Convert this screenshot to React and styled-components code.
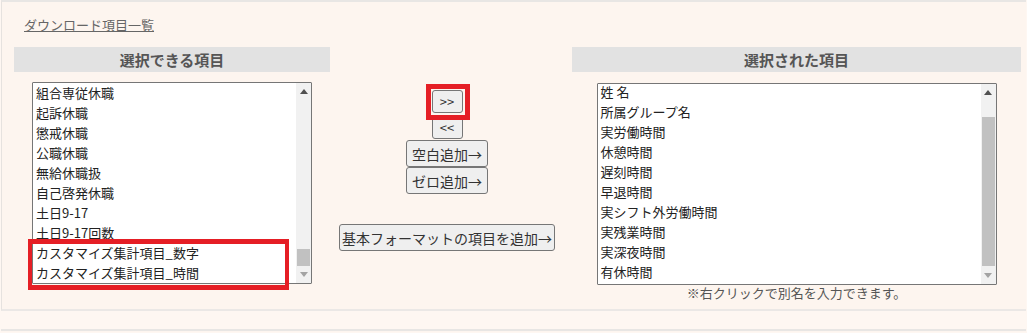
import React from "react";
import styled, { createGlobalStyle } from "styled-components";

const leftItems = [
  "組合専従休職",
  "起訴休職",
  "懲戒休職",
  "公職休職",
  "無給休職扱",
  "自己啓発休職",
  "土日9-17",
  "土日9-17回数",
  "カスタマイズ集計項目_数字",
  "カスタマイズ集計項目_時間",
];

const rightItems = [
  "姓 名",
  "所属グループ名",
  "実労働時間",
  "休憩時間",
  "遅刻時間",
  "早退時間",
  "実シフト外労働時間",
  "実残業時間",
  "実深夜時間",
  "有休時間",
];

export default function App() {
  return (
    <>
      <GlobalStyle />
      <Panel>
        <DownloadLink href="#">ダウンロード項目一覧</DownloadLink>
        <Columns>
          <Column>
            <ColumnHeader>選択できる項目</ColumnHeader>
            <ListWrap $width={280} $top={10}>
              <ListBox>
                <Items>
                  {leftItems.map((item, index) => (
                    <Item key={index}>{item}</Item>
                  ))}
                </Items>
                <ScrollBar thumbTop={149} thumbHeight={17} />
              </ListBox>
              <Highlight />
            </ListWrap>
          </Column>

          <ButtonColumn>
            <Marker>
              <ActionButton $w={31} $h={23}>
                &gt;&gt;
              </ActionButton>
            </Marker>
            <ActionButton $w={31} $h={23} $mt={3}>
              &lt;&lt;
            </ActionButton>
            <ActionButton $w={82} $h={27} $mt={1}>
              空白追加→
            </ActionButton>
            <ActionButton $w={82} $h={27}>
              ゼロ追加→
            </ActionButton>
            <ActionButton $w={216} $h={27} $mt={30}>
              基本フォーマットの項目を追加→
            </ActionButton>
          </ButtonColumn>

          <Column>
            <ColumnHeader>選択された項目</ColumnHeader>
            <ListWrap $width={400} $top={11}>
              <ListBox>
                <Items $offset={-2}>
                  {rightItems.map((item, index) => (
                    <Item key={index}>{item}</Item>
                  ))}
                </Items>
                <ScrollBar thumbTop={16} thumbHeight={149} />
              </ListBox>
            </ListWrap>
            <Note>※右クリックで別名を入力できます。</Note>
          </Column>
        </Columns>
      </Panel>
      <NextPanel />
    </>
  );
}

function ScrollBar({ thumbTop, thumbHeight }) {
  return (
    <Scroll>
      <ArrowBtn>
        <svg width="8" height="5" viewBox="0 0 8 5">
          <path d="M0 5 L4 0 L8 5 Z" fill="#505050" />
        </svg>
      </ArrowBtn>
      <Track>
        <Thumb style={{ marginTop: thumbTop, height: thumbHeight }} />
      </Track>
      <ArrowBtn>
        <svg width="8" height="5" viewBox="0 0 8 5">
          <path d="M0 0 L8 0 L4 5 Z" fill="#a3a3a3" />
        </svg>
      </ArrowBtn>
    </Scroll>
  );
}

const GlobalStyle = createGlobalStyle`
  html, body {
    margin: 0;
    overflow: hidden;
  }
  body {
    background: #fef7f2;
    font-family: "Noto Sans CJK JP", "Noto Sans", sans-serif;
    color: #222;
  }
`;

const Panel = styled.section`
  width: 1025px;
  margin-left: 1px;
  box-sizing: border-box;
  background: #fdf5ef;
  border-top: 2px solid #e8e6e4;
  border-left: 1px solid #e6e2df;
  border-bottom: 2px solid #ebe8e6;
  padding: 14px 5px 9px 12px;
`;

const NextPanel = styled.div`
  width: 1025px;
  margin: 18px 0 0 1px;
  height: 1px;
  background: #fdf5ef;
  border-top: 2px solid #e8e6e4;
`;

const DownloadLink = styled.a`
  display: block;
  margin-left: 10px;
  height: 18px;
  line-height: 18px;
  font-size: 13px;
  color: #666;
  text-decoration: underline;
  width: max-content;
`;

const Columns = styled.div`
  display: grid;
  grid-template-columns: 316px 242px 449px;
  margin-top: 13px;
`;

const Column = styled.div`
  display: flex;
  flex-direction: column;
  align-items: center;
`;

const ColumnHeader = styled.div`
  align-self: stretch;
  height: 25px;
  line-height: 25px;
  background: #e2e2e2;
  color: #555;
  font-size: 15px;
  font-weight: bold;
  text-align: center;
`;

const ListWrap = styled.div`
  position: relative;
  width: ${(p) => p.$width}px;
  margin-top: ${(p) => p.$top}px;
`;

const ListBox = styled.div`
  display: flex;
  height: 202px;
  box-sizing: border-box;
  border: 1px solid #767676;
  border-radius: 1px;
  background: #fff;
  overflow: hidden;
`;

const Items = styled.div`
  flex: 1;
  min-width: 0;
  margin-top: ${(p) => p.$offset || 0}px;
`;

const Item = styled.div`
  height: 20px;
  line-height: 20px;
  padding: 0 3px;
  font-size: 13px;
  color: #222;
  white-space: nowrap;
`;

const Scroll = styled.div`
  width: 15px;
  display: flex;
  flex-direction: column;
  background: #f1f1f1;
`;

const ArrowBtn = styled.div`
  height: 17px;
  display: flex;
  align-items: center;
  justify-content: center;
`;

const Track = styled.div`
  flex: 1;
  display: flex;
  flex-direction: column;
`;

const Thumb = styled.div`
  margin-left: 1px;
  margin-right: 1px;
  background: #c1c1c1;
`;

const Highlight = styled.div`
  position: absolute;
  left: -4px;
  top: 157px;
  width: 261px;
  height: 51px;
  box-sizing: border-box;
  border: 4px solid #e51e25;
  border-top-width: 5px;
  border-bottom-width: 5px;
  pointer-events: none;
`;

const ButtonColumn = styled.div`
  display: flex;
  flex-direction: column;
  align-items: center;
  padding-top: 43px;
  padding-right: 8px;
`;

const Marker = styled.div`
  position: relative;
  z-index: 1;
  display: flex;
  padding: 1px;
  margin: -6px -7px -7px -6px;
  padding-right: 2px;
  padding-bottom: 2px;
  border: 5px solid #e51e25;
`;

const ActionButton = styled.button`
  width: ${(p) => p.$w}px;
  height: ${(p) => p.$h}px;
  margin-top: ${(p) => p.$mt || 0}px;
  padding: 0;
  box-sizing: border-box;
  border: 1px solid #767676;
  border-radius: 3px;
  background: #efefef;
  color: #333;
  font-family: "Noto Sans CJK JP", "Noto Sans", sans-serif;
  font-size: ${(p) => (p.$w < 40 ? 13 : 14)}px;
  line-height: 1;
  white-space: nowrap;
`;

const Note = styled.div`
  line-height: 15px;
  font-size: 13px;
  color: #555;
  text-align: center;
`;
